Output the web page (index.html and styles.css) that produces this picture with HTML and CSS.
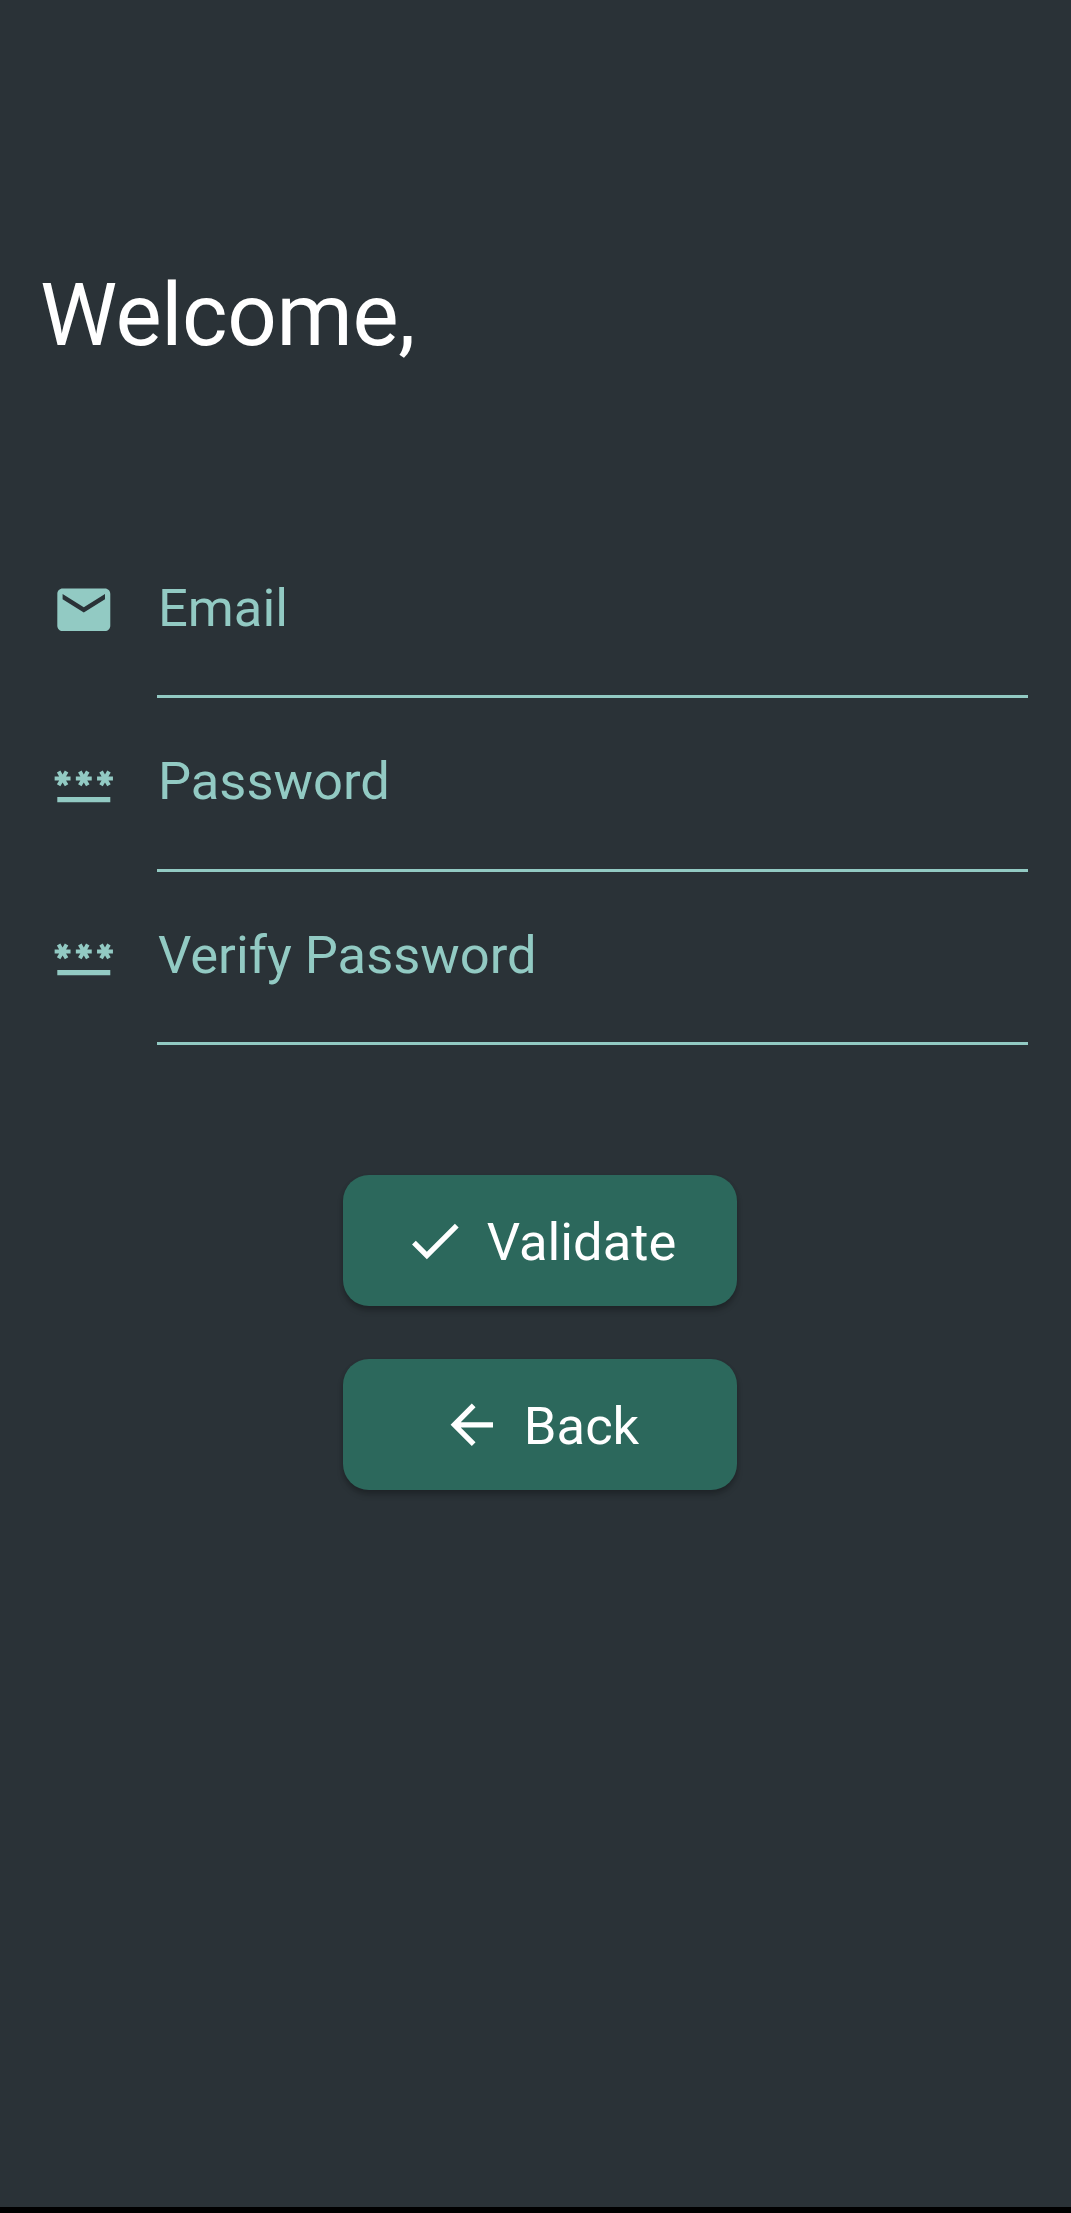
FILE: index.html
```html
<!DOCTYPE html>
<html lang="en">
<head>
<meta charset="utf-8">
<title>Welcome</title>
<link rel="stylesheet" href="styles.css">
</head>
<body>
<main class="screen">
  <h1 class="title">Welcome,</h1>
  <form class="form">
    <label class="field">
      <svg class="icon" viewBox="0 0 24 24"><path d="M20 4H4c-1.100 0-1.990.9-1.990 2L2 18c0 1.100.9 2 2 2h16c1.100 0 2-.9 2-2V6c0-1.100-.9-2-2-2zm0 4l-8 5-8-5V6l8 5 8-5v2z"/></svg>
      <span class="input">Email</span>
    </label>
    <label class="field">
      <svg class="icon" viewBox="0 0 24 24"><path id="stars" d="M2 17h20v2H2zM3.150 12.950L4 11.470l.85 1.480 1.300-.75-.85-1.480H7v-1.500H5.300l.85-1.470L4.850 7 4 8.470 3.150 7l-1.300.75.85 1.470H1v1.500h1.700l-.85 1.480zM11.150 12.950l.85-1.480.85 1.480 1.300-.75-.85-1.480H15v-1.500h-1.700l.85-1.470L12.850 7 12 8.470 11.150 7l-1.300.75.85 1.470H9v1.500h1.700l-.85 1.480zM23 9.220h-1.700l.85-1.470L20.850 7 20 8.470 19.150 7l-1.300.75.85 1.470H17v1.500h1.700l-.85 1.480 1.300.75.85-1.480.85 1.480 1.300-.75-.85-1.480H23z"/></svg>
      <span class="input">Password</span>
    </label>
    <label class="field">
      <svg class="icon" viewBox="0 0 24 24"><use href="#stars"/></svg>
      <span class="input">Verify Password</span>
    </label>
  </form>
  <div class="actions">
    <button class="button" type="button">
      <svg class="icon" viewBox="0 0 24 24"><path d="M9 16.170L4.830 12l-1.420 1.410L9 19 21 7l-1.410-1.410z"/></svg>
      <span class="caption">Validate</span>
    </button>
    <button class="button" type="button">
      <svg class="icon" viewBox="0 0 24 24"><path d="M20 11H7.830l5.590-5.590L12 4l-8 8 8 8 1.410-1.410L7.830 13H20v-2z"/></svg>
      <span class="caption">Back</span>
    </button>
  </div>
</main>
</body>
</html>
```
FILE: styles.css
```css
* { box-sizing: border-box; }

body {
  margin: 0;
  background: #2a3237;
  font-family: Roboto, "Liberation Sans", sans-serif;
}

.screen {
  display: flex;
  flex-direction: column;
  height: 2213px;
  padding: 264px 43.500px 0 40px;
  border-bottom: 6px solid #000;
}

.title {
  margin: 0;
  color: #fff;
  font-size: 87px;
  font-weight: 400;
  letter-spacing: -.35px;
  line-height: 102px;
}

.form {
  display: flex;
  flex-direction: column;
  margin-top: 159px;
}

.field {
  display: flex;
  height: 173.300px;
  padding-left: 12px;
  color: #92cac3;
}

.icon {
  flex: none;
  width: 63.600px;
  height: 63.600px;
  fill: currentColor;
}

.field .icon { margin-top: 53.400px; }

.input {
  flex: 1;
  margin-left: 41.700px;
  padding: 52px 0 0 .7px;
  border-bottom: 3px solid #92cac3;
  font-size: 52.500px;
  line-height: 62px;
}

.actions {
  display: flex;
  flex-direction: column;
  align-items: center;
  gap: 52.500px;
  margin-top: 130px;
  padding-left: 12.500px;
}

.button {
  display: flex;
  align-items: center;
  justify-content: center;
  gap: 20.500px;
  width: 394px;
  height: 131.300px;
  padding: 0 1px 0 0;
  border: 0;
  border-radius: 26px;
  background: #2c685c;
  box-shadow: 0 5px 6px rgba(0, 0, 0, .2), 0 2px 4px rgba(0, 0, 0, .12);
  color: #fff;
  font: inherit;
  font-size: 52.500px;
}

.caption { padding-top: 3.500px; }
```
